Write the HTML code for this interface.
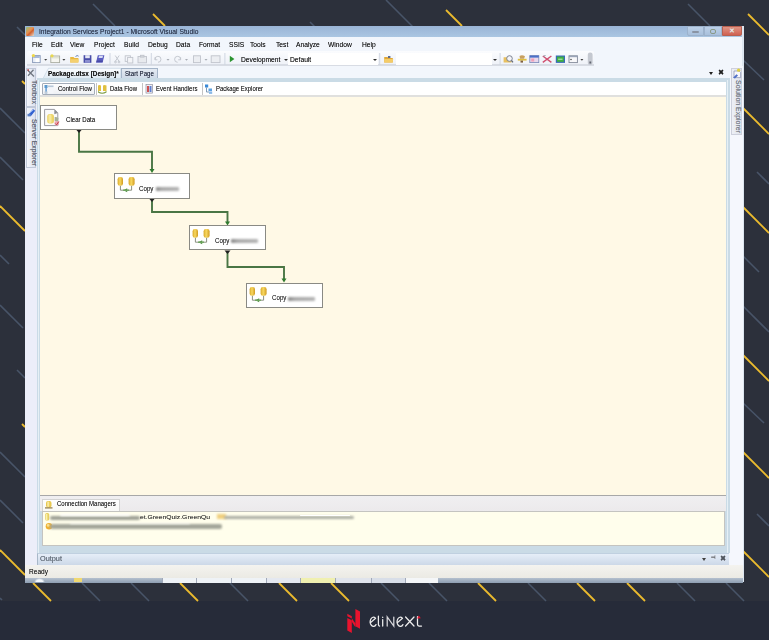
<!DOCTYPE html>
<html><head><meta charset="utf-8">
<style>
*{margin:0;padding:0;box-sizing:border-box}
html,body{width:769px;height:640px;overflow:hidden;background:#2c303b;font-family:"Liberation Sans",sans-serif}
.a{position:absolute}
.t{position:absolute;white-space:nowrap;line-height:1;color:#1e1e1e;text-shadow:0 0 0.5px rgba(0,0,0,0.45)}
</style></head><body>
<svg class="a" style="left:0;top:0" width="769" height="640" viewBox="0 0 769 640">
<rect x="0" y="601" width="769" height="39" fill="#262b39"/>
<g stroke="#485468" stroke-width="1.6" fill="none">
<line x1="17" y1="27" x2="25" y2="35"/>
<line x1="93" y1="4" x2="115" y2="26"/>
<line x1="310" y1="22" x2="315" y2="27"/>
<line x1="386" y1="0" x2="413" y2="27"/>
<line x1="688" y1="4" x2="710" y2="26"/>
<line x1="0" y1="108" x2="25" y2="133"/>
<line x1="0" y1="157" x2="23" y2="180"/>
<line x1="0" y1="255" x2="9" y2="264"/>
<line x1="0" y1="305" x2="23" y2="328"/>
<line x1="17" y1="370" x2="25" y2="378"/>
<line x1="0" y1="452" x2="25" y2="477"/>
<line x1="0" y1="500" x2="23" y2="523"/>
<line x1="743" y1="60" x2="764" y2="80"/>
<line x1="757" y1="172" x2="769" y2="184"/>
<line x1="743" y1="256" x2="759" y2="272"/>
<line x1="743" y1="306" x2="769" y2="332"/>
<line x1="743" y1="403" x2="764" y2="423"/>
<line x1="757" y1="514" x2="769" y2="526"/>
<line x1="0" y1="598" x2="2" y2="600"/>
<line x1="82" y1="583" x2="100" y2="601"/>
<line x1="131" y1="583" x2="149" y2="601"/>
<line x1="230" y1="583" x2="248" y2="601"/>
<line x1="381" y1="583" x2="399" y2="601"/>
<line x1="429" y1="583" x2="447" y2="601"/>
<line x1="528" y1="583" x2="546" y2="601"/>
<line x1="677" y1="583" x2="695" y2="601"/>
<line x1="726" y1="583" x2="744" y2="601"/>
</g>
<g stroke="#ebbb2e" stroke-width="1.8" fill="none">
<line x1="153" y1="14" x2="165" y2="26"/>
<line x1="446" y1="10" x2="462" y2="26"/>
<line x1="748" y1="14" x2="769" y2="35"/>
<line x1="22" y1="81" x2="25" y2="84"/>
<line x1="0" y1="206" x2="25" y2="231"/>
<line x1="22" y1="424" x2="25" y2="427"/>
<line x1="0" y1="550" x2="25" y2="575"/>
<line x1="743" y1="108" x2="769" y2="134"/>
<line x1="743" y1="207" x2="769" y2="233"/>
<line x1="743" y1="355" x2="769" y2="381"/>
<line x1="743" y1="452" x2="769" y2="478"/>
<line x1="743" y1="551" x2="769" y2="577"/>
<line x1="33" y1="583" x2="51" y2="601"/>
<line x1="180" y1="583" x2="198" y2="601"/>
<line x1="279" y1="583" x2="297" y2="601"/>
<line x1="331" y1="583" x2="349" y2="601"/>
<line x1="478" y1="583" x2="496" y2="601"/>
<line x1="577" y1="583" x2="595" y2="601"/>
<line x1="627" y1="583" x2="645" y2="601"/>
</g></svg>
<svg class="a" style="left:340px;top:604px" width="90" height="34" viewBox="340 604 90 34">
<g fill="#e8132e">
<polygon points="355.4,609 360,611.4 360,628.7 355.4,626.3"/>
<polygon points="347.3,618 351.8,620.3 351.8,633 347.3,630.5"/>
<polygon points="347.3,613.8 351.8,616.2 351.8,618.6 347.3,616.3"/>
<polygon points="351.8,618.2 355.4,623.6 355.4,627.2 351.8,621.8"/>
</g>
<g fill="none" stroke="#eeeeee" stroke-width="1.25" stroke-linecap="round">
<path d="M375.6,618.3 L370.3,622.9 M375.3,618 A3.2,4.6 0 1 0 376,624.6"/>
<path d="M378.4,616 V624.6 Q378.4,626 379.6,626"/>
<path d="M382.7,619.6 V626 M382.7,617.2 V617.4"/>
<path d="M387.2,626 V617 L393.8,626 V617" stroke="#d8d8dc"/>
<path d="M402.5,618.3 L397.2,622.9 M402.2,618 A3.2,4.6 0 1 0 402.9,624.6"/>
<path d="M405.6,617 L414,626 M414,617 L405.6,626"/>
<path d="M417.5,616.5 V624.6 Q417.5,626 419,626 H421.5"/>
</g>
<polygon points="417,618.6 420.8,618.2 418.8,615.6" fill="#e8132e"/>
</svg>
<div class="a" style="left:25px;top:26px;width:718px;height:557px;background:#f2f6fc;"></div>
<div class="a" style="left:25px;top:26px;width:718px;height:11px;background:linear-gradient(#9ab4d6,#aac6e2);"></div>
<div class="t" style="left:38.5px;top:27.93px;font-size:7.37px;color:#2a3550;transform:scaleX(0.9091);transform-origin:0 0;">Integration Services Project1 - Microsoft Visual Studio</div>
<div class="a" style="left:687px;top:26px;width:17px;height:10px;background:linear-gradient(#bcd0e8,#a8c0dc);border:1px solid #9cb2cc;border-radius:0 0 0 2px"></div>
<div class="a" style="left:704px;top:26px;width:18px;height:10px;background:linear-gradient(#bcd0e8,#a8c0dc);border:1px solid #9cb2cc"></div>
<div class="a" style="left:692px;top:31.2px;width:7px;height:1.6px;background:#8a94a4;border-radius:1px"></div>
<div class="a" style="left:710px;top:29.2px;width:6px;height:5px;background:transparent;border:1.1px solid #8a9a88;border-radius:2px"></div>
<div class="a" style="left:722px;top:26px;width:19.5px;height:10px;background:linear-gradient(#e09484,#d06050);border:1px solid #b86050;border-radius:0 0 2px 0"></div>
<div class="t" style="left:729.2px;top:28.3px;font-size:6.5px;color:#f4f0f0;font-weight:bold;transform:none">&#x2715;</div>
<div class="a" style="left:741.5px;top:26px;width:2px;height:556px;background:#dde6f0;"></div>
<div class="a" style="left:26px;top:26.5px;width:8px;height:9px;background:linear-gradient(135deg,#8cc080 0%,#e89050 45%,#d06030 60%,#e8e0d0 100%);border-radius:1px"></div>
<div class="t" style="left:32px;top:41.33px;font-size:7.37px;color:#101010;transform:scaleX(0.9091);transform-origin:0 0;">File</div>
<div class="t" style="left:51px;top:41.33px;font-size:7.37px;color:#101010;transform:scaleX(0.9091);transform-origin:0 0;">Edit</div>
<div class="t" style="left:70px;top:41.33px;font-size:7.37px;color:#101010;transform:scaleX(0.9091);transform-origin:0 0;">View</div>
<div class="t" style="left:94px;top:41.33px;font-size:7.37px;color:#101010;transform:scaleX(0.9091);transform-origin:0 0;">Project</div>
<div class="t" style="left:123.5px;top:41.33px;font-size:7.37px;color:#101010;transform:scaleX(0.9091);transform-origin:0 0;">Build</div>
<div class="t" style="left:147.8px;top:41.33px;font-size:7.37px;color:#101010;transform:scaleX(0.9091);transform-origin:0 0;">Debug</div>
<div class="t" style="left:176.2px;top:41.33px;font-size:7.37px;color:#101010;transform:scaleX(0.9091);transform-origin:0 0;">Data</div>
<div class="t" style="left:198.8px;top:41.33px;font-size:7.37px;color:#101010;transform:scaleX(0.9091);transform-origin:0 0;">Format</div>
<div class="t" style="left:229px;top:41.33px;font-size:7.37px;color:#101010;transform:scaleX(0.9091);transform-origin:0 0;">SSIS</div>
<div class="t" style="left:250px;top:41.33px;font-size:7.37px;color:#101010;transform:scaleX(0.9091);transform-origin:0 0;">Tools</div>
<div class="t" style="left:275.5px;top:41.33px;font-size:7.37px;color:#101010;transform:scaleX(0.9091);transform-origin:0 0;">Test</div>
<div class="t" style="left:296px;top:41.33px;font-size:7.37px;color:#101010;transform:scaleX(0.9091);transform-origin:0 0;">Analyze</div>
<div class="t" style="left:328px;top:41.33px;font-size:7.37px;color:#101010;transform:scaleX(0.9091);transform-origin:0 0;">Window</div>
<div class="t" style="left:362px;top:41.33px;font-size:7.37px;color:#101010;transform:scaleX(0.9091);transform-origin:0 0;">Help</div>
<div class="a" style="left:27px;top:51px;width:567px;height:14px;background:linear-gradient(#fbfcfe,#eef1f7);border-radius:2px"></div>
<div class="a" style="left:27px;top:64px;width:567px;height:2px;background:#d8dce4;"></div>
<svg class="a" style="left:0;top:50px" width="600" height="18" viewBox="0 50 600 18">
<g>
<!-- new project -->
<rect x="32.6" y="55.6" width="7.6" height="7" fill="#e8eef8" stroke="#8898b8" stroke-width="0.9"/>
<rect x="33.2" y="56.2" width="6.4" height="1.6" fill="#98acd0"/>
<rect x="35.5" y="58.3" width="3.8" height="3.8" fill="#ffffff"/>
<circle cx="33.4" cy="55.6" r="1.6" fill="#f0d848"/>
<!-- add item -->
<rect x="50.8" y="56" width="8.8" height="6.6" fill="#f6f6f0" stroke="#a8aca0" stroke-width="0.9"/>
<path d="M51.3,57.8 H59" stroke="#d8dcc8" stroke-width="1"/>
<circle cx="52" cy="55.8" r="1.6" fill="#e8d850"/>
<!-- open -->
<path d="M70.2,57 H73.5 L74.5,58 H78.4 V62.6 H70.2 Z" fill="#e8b840"/>
<path d="M70.2,59.2 H78.8 L78.2,62.6 H70.2 Z" fill="#f4d070"/>
<path d="M75.5,56.5 Q77.2,54.8 78.6,56.2" fill="none" stroke="#4060a0" stroke-width="0.8"/>
<!-- save -->
<rect x="83.6" y="55.2" width="7.8" height="7.6" fill="#4a4ea8"/>
<rect x="85.2" y="55.2" width="4.6" height="3" fill="#e4e6f4"/>
<rect x="85" y="60" width="5" height="2.8" fill="#8a8ed0"/>
<!-- save all -->
<path d="M97.8,55.2 H104.4 L102.6,62.8 H96 Z" fill="#5a5cc0"/>
<path d="M99,55.8 H103 L102.5,58 H98.5 Z" fill="#d8dcf4"/>
<path d="M96.3,61.2 H102.8" stroke="#3a3c90" stroke-width="0.8"/>
</g>
<g fill="none" stroke="#c0c4cc" stroke-width="0.9">
<path d="M115.2,55.5 L119.2,61.5 M119.2,55.5 L115.2,61.5"/><circle cx="115.5" cy="62" r="0.9"/><circle cx="119" cy="62" r="0.9"/>
<rect x="125.2" y="55.8" width="5.2" height="5.6"/><rect x="127.6" y="57.4" width="5.2" height="5.6" fill="#f4f5f8"/>
<rect x="138" y="56.5" width="8.5" height="6.3" fill="#e8eaee"/><rect x="140.5" y="55.3" width="3.5" height="1.8" fill="#d8dade"/>
<path d="M155,59.5 A3,3 0 1 1 158,62.3" /><path d="M155,57.3 V59.8 H157.4"/>
<path d="M180.6,59.5 A3,3 0 1 0 177.6,62.3"/><path d="M180.6,57.3 V59.8 H178.2"/>
<rect x="193.5" y="55.8" width="7" height="6.8" fill="#eceef2"/>
<rect x="211.2" y="55.8" width="8.8" height="6.8" fill="#eceef2"/>
</g>
<g fill="#a8acb4">
<path d="M166.5,59 h3 l-1.5,1.8 z"/><path d="M185,59 h3 l-1.5,1.8 z"/><path d="M204.5,59 h3 l-1.5,1.8 z"/>
<path d="M44.2,59 h3 l-1.5,1.8 z" fill="#404040"/><path d="M62.4,59 h3 l-1.5,1.8 z" fill="#404040"/>
</g>
<g fill="#d0d6e2"><rect x="109.5" y="53" width="1" height="12"/><rect x="150.8" y="53" width="1" height="12"/><rect x="224.4" y="53" width="1" height="12"/><rect x="379.2" y="53" width="1" height="12"/><rect x="499.6" y="53" width="1" height="12"/></g>
<path d="M229.8,55.8 L234.4,59 L229.8,62.2 Z" fill="#2c9430"/>
<!-- right icons -->
<path d="M384.2,57 H387.5 L388.5,58 H392.8 V62.6 H384.2 Z" fill="#e0a838"/>
<path d="M384.2,59 H393.2 L392.6,62.6 H384.2 Z" fill="#f4cc68"/>
<rect x="388" y="56" width="2.4" height="2" fill="#5a6a90"/>
<path d="M503.6,57.2 H507 L508,58.2 H511.5 V62.4 H503.6 Z" fill="#e8c060"/>
<circle cx="509.5" cy="58.5" r="2.8" fill="#f4f4f8" stroke="#707888" stroke-width="0.9"/>
<path d="M511.5,60.5 L513,62.3" stroke="#606878" stroke-width="1.2"/>
<path d="M517.8,58.8 H526.6 V60.6 H517.8 Z" fill="#e0c040"/>
<path d="M519.5,56 Q522,54.5 525,56.2 L524,58.8 H520 Z" fill="#c8a060"/>
<path d="M520.5,60.6 V62.6 H523 V60.6 Z" fill="#806040"/>
<rect x="529.8" y="55.6" width="9" height="7" fill="#e8d8ec" stroke="#7888b8" stroke-width="0.8"/>
<rect x="529.8" y="55.6" width="9" height="2" fill="#4a70c8"/>
<rect x="531.2" y="58.5" width="3" height="3" fill="#f0a0b8"/>
<path d="M542.8,56 L551.4,62.4 M551.4,56 L542.8,62.4" stroke="#d05070" stroke-width="1.4"/>
<path d="M543.5,56.2 L545.5,55.5" stroke="#9098a8" stroke-width="1"/>
<rect x="555.8" y="55.5" width="9.2" height="7.4" fill="#3a6ab8"/>
<rect x="557" y="56.6" width="6.8" height="5.2" fill="#40b040"/>
<path d="M558.2,59.2 H562.5" stroke="#e8ffe8" stroke-width="0.8"/>
<rect x="569" y="55.8" width="8.4" height="6.8" fill="#f8f8fa" stroke="#808898" stroke-width="0.9"/>
<rect x="569" y="55.8" width="8.4" height="1.4" fill="#9aa4b8"/>
<circle cx="571" cy="59.5" r="0.7" fill="#303030"/>
<path d="M580.4,59 h3 l-1.5,1.8 z" fill="#404040"/>
<rect x="587.8" y="52.5" width="4.8" height="12.5" rx="2.2" fill="#c4c8d0"/>
<rect x="589.4" y="61.5" width="1.8" height="2" fill="#606470"/>
</svg>
<div class="t" style="left:240.5px;top:55.93px;font-size:7.37px;color:#101010;transform:scaleX(0.9091);transform-origin:0 0;">Development</div>
<div class="a" style="left:283.5px;top:59.3px;width:0;height:0;border-left:2px solid transparent;border-right:2px solid transparent;border-top:2px solid #303030"></div>
<div class="a" style="left:288px;top:53px;width:90px;height:12px;background:#ffffff;"></div>
<div class="t" style="left:290.2px;top:55.93px;font-size:7.37px;color:#101010;transform:scaleX(0.9091);transform-origin:0 0;">Default</div>
<div class="a" style="left:372.8px;top:59.3px;width:0;height:0;border-left:2px solid transparent;border-right:2px solid transparent;border-top:2px solid #303030"></div>
<div class="a" style="left:396px;top:53px;width:96px;height:12px;background:#ffffff;"></div>
<div class="a" style="left:493.2px;top:59.3px;width:0;height:0;border-left:2px solid transparent;border-right:2px solid transparent;border-top:2px solid #303030"></div>
<div class="a" style="left:37px;top:66px;width:692px;height:13px;background:#f2f6fc;"></div>
<svg class="a" style="left:40px;top:66px" width="84" height="14" viewBox="40 66 84 14">
<defs><linearGradient id="atab" x1="0" y1="0" x2="0" y2="1"><stop offset="0" stop-color="#fbfdff"/><stop offset="1" stop-color="#dde8f2"/></linearGradient></defs>
<path d="M42.5,79.5 L48.5,68.3 H120.8 V79.5 Z" fill="url(#atab)" stroke="#c8d6e4" stroke-width="0.8"/>
</svg>
<div class="t" style="left:47.6px;top:69.96px;font-size:7.04px;color:#101010;transform:scaleX(0.9091);transform-origin:0 0;font-weight:bold">Package.dtsx [Design]*</div>
<div class="a" style="left:120.8px;top:68.3px;width:37.2px;height:10.2px;background:linear-gradient(#e4eaf2,#d0dae8);border:1px solid #a4b4c8;border-bottom:none"></div>
<div class="t" style="left:124.8px;top:70.68px;font-size:6.71px;color:#202840;transform:scaleX(0.9091);transform-origin:0 0;">Start Page</div>
<div class="a" style="left:709px;top:71.5px;width:0;height:0;border-left:2.5px solid transparent;border-right:2.5px solid transparent;border-top:3px solid #202020"></div>
<div class="t" style="left:718.2px;top:68.99px;font-size:7.92px;color:#202020;transform:scaleX(0.9091);transform-origin:0 0;">&#x2716;</div>
<div class="a" style="left:25px;top:66px;width:12px;height:500px;background:#eceef9;"></div>
<div class="a" style="left:26.3px;top:68.3px;width:9.5px;height:38.5px;background:linear-gradient(90deg,#f4f6fc,#dde2ee);border:1px solid #c0c8d8"></div>
<div class="a" style="left:26.3px;top:106.8px;width:9.5px;height:61px;background:linear-gradient(90deg,#f4f6fc,#dde2ee);border:1px solid #c0c8d8"></div>
<div class="t" style="left:27.5px;top:80.3px;font-size:6.96px;color:#606878;transform-origin:0 0;transform:rotate(90deg) translate(0,-8.5px)">Toolbox</div>
<div class="t" style="left:27.5px;top:119px;font-size:6.77px;color:#606878;transform-origin:0 0;transform:rotate(90deg) translate(0,-8.5px)">Server Explorer</div>
<svg class="a" style="left:25px;top:66px" width="12" height="54" viewBox="25 66 12 54">
<path d="M27.5,70 L34,76.5 M33.5,69.8 L28,75.8" stroke="#707680" stroke-width="1.3"/>
<path d="M27,69.5 L29,69.3 L28.6,71.5 Z" fill="#c04040"/>
<path d="M28.5,114.5 L33,109 L35.2,110.8 L30.8,116.2 Z" fill="#3060d0"/>
<path d="M30,112.5 L33.5,109.8" stroke="#a0c0f8" stroke-width="0.9"/>
<rect x="27.5" y="113.8" width="3.2" height="2.6" fill="#5a80c8"/>
</svg>
<div class="a" style="left:730px;top:66px;width:13px;height:500px;background:#f5f7fd;"></div>
<div class="a" style="left:730.6px;top:67.8px;width:11px;height:67px;background:linear-gradient(90deg,#eef0f6,#dde1ea);border:1px solid #cdd0dc"></div>
<svg class="a" style="left:730px;top:66px" width="13" height="14" viewBox="730 66 13 14">
<path d="M734,71 H739 L740.6,72.6 V77.6 H734 Z" fill="#f8f8fc" stroke="#8890b0" stroke-width="0.7"/>
<circle cx="738.6" cy="70.2" r="1.6" fill="#e0d040"/>
<path d="M733,77.8 L736.5,74.2 L738,75.6 L735,78.4 Z" fill="#5070c8"/>
</svg>
<div class="t" style="left:732px;top:80px;font-size:6.96px;color:#7a8290;transform-origin:0 0;transform:rotate(90deg) translate(0,-8.8px)">Solution Explorer</div>
<div class="a" style="left:37px;top:78px;width:693px;height:475px;background:#cadbe6;"></div>
<div class="a" style="left:38px;top:80px;width:1.2px;height:473px;background:#e6f0f6;"></div>
<div class="a" style="left:727.2px;top:80px;width:1.2px;height:473px;background:#e6f0f6;"></div>
<div class="a" style="left:40px;top:81.5px;width:686px;height:13px;background:#ffffff;"></div>
<div class="a" style="left:40px;top:94.5px;width:686px;height:2px;background:#e0e0de;"></div>
<div class="a" style="left:42.3px;top:83.2px;width:53.2px;height:11.5px;background:linear-gradient(#fefefe,#eef0f4);border:1px solid #a4acb8;border-radius:1px"></div>
<svg class="a" style="left:0;top:80px" width="230" height="18" viewBox="0 80 230 18">
<rect x="44.5" y="85" width="9" height="8.6" fill="#f4f6fa"/>
<rect x="44.5" y="85" width="3" height="3" fill="#5a9ad0"/>
<rect x="47.5" y="85.5" width="6" height="1.6" fill="#b8c8d8"/>
<rect x="45.2" y="88" width="1.8" height="5.5" fill="#7aaad8"/>
<rect x="44.5" y="91.5" width="3" height="2.1" fill="#c0ccd8"/>
<path d="M98,85.5 Q99.5,84.5 101,85.5 V91 H98 Z M103,85.5 Q104.5,84.5 106.5,85.5 V91 H103 Z" fill="#e0c040"/>
<path d="M98,91 Q102,94.5 106.5,91 V92.5 Q102,95 98,92.5 Z" fill="#7a9a40"/>
<rect x="146" y="84.5" width="6.5" height="8.6" fill="#f0f0f4" stroke="#9090a0" stroke-width="0.7"/>
<rect x="147" y="86" width="2" height="6" fill="#d05050"/>
<rect x="149.5" y="86" width="2" height="6" fill="#6080d0"/>
<rect x="205" y="84.5" width="3.2" height="3" fill="#3a8ad8"/>
<path d="M206.5,87.5 V92 H209" fill="none" stroke="#7090b0" stroke-width="0.9"/>
<rect x="208.5" y="88.5" width="3.5" height="2.6" fill="#5aa0e0"/>
<rect x="209" y="91.5" width="3.2" height="2.4" fill="#8ab8e8"/>
</svg>
<div class="t" style="left:57.5px;top:86.28px;font-size:6.67px;color:#1a1a1a;transform:scaleX(0.9091);transform-origin:0 0;">Control Flow</div>
<div class="a" style="left:96px;top:83px;width:1px;height:12px;background:#c4c4c4;"></div>
<div class="t" style="left:110.2px;top:86.29px;font-size:6.60px;color:#1a1a1a;transform:scaleX(0.9091);transform-origin:0 0;">Data Flow</div>
<div class="a" style="left:141.8px;top:83px;width:1px;height:12px;background:#c4c4c4;"></div>
<div class="t" style="left:156.3px;top:86.28px;font-size:6.68px;color:#1a1a1a;transform:scaleX(0.9091);transform-origin:0 0;">Event Handlers</div>
<div class="a" style="left:202.3px;top:83px;width:1px;height:12px;background:#c4c4c4;"></div>
<div class="t" style="left:216px;top:86.29px;font-size:6.55px;color:#1a1a1a;transform:scaleX(0.9091);transform-origin:0 0;">Package Explorer</div>
<div class="a" style="left:40px;top:96.5px;width:686px;height:398.5px;background:#fff9e6;"></div>
<svg class="a" style="left:0;top:0" width="769" height="640" viewBox="0 0 769 640">
<g fill="none" stroke="#4a7644" stroke-width="1.9">
<polyline points="79,131 79,151.8 152,151.8 152,170"/>
<polyline points="152,200 152,212 227.5,212 227.5,222"/>
<polyline points="227.5,252 227.5,267 284,267 284,279"/>
</g>
<g fill="#2f7a2f">
<polygon points="149.5,169 154.5,169 152,173"/>
<polygon points="225,221.5 230,221.5 227.5,225.5"/>
<polygon points="281.5,278.5 286.5,278.5 284,282.5"/>
</g>
<g fill="#202020">
<polygon points="76,129.5 82,129.5 79,133"/>
<polygon points="149,198.5 155,198.5 152,202"/>
<polygon points="224.5,250.5 230.5,250.5 227.5,254"/>
</g>
</svg>
<div class="a" style="left:40px;top:105px;width:77px;height:25px;background:#ffffff;border:1.5px solid #8a8a84"></div>
<svg class="a" style="left:40px;top:105px" width="24" height="25" viewBox="0 0 24 25">
<path d="M4.6,4.4 H14.5 L17.8,7.8 V20.6 H4.6 Z" fill="#fafafa" stroke="#9a9aa0" stroke-width="1"/>
<path d="M14.3,4.6 L17.6,8 L14.3,9.2 Z" fill="#8a8c90"/>
<rect x="7.2" y="9" width="6.8" height="9.4" rx="2.5" fill="#ecd46a"/>
<rect x="8.5" y="9.5" width="3" height="8.5" rx="1.2" fill="#f6e89a"/>
<path d="M14.6,12 Q16.5,11.5 18.5,13 L18,16 L14.6,16 Z" fill="#a8b098"/>
<path d="M14.5,16.4 Q17,15.5 19.2,17 L18.6,20 Q16.5,21.2 14.8,19.8 Z" fill="#e8a8b0"/>
<path d="M15.3,18.5 L16.6,19.8 L18.8,16.5" fill="none" stroke="#c83040" stroke-width="0.9"/>
</svg>
<div class="t" style="left:66px;top:117.08px;font-size:6.72px;color:#1a1a1a;transform:scaleX(0.9091);transform-origin:0 0;">Clear Data</div>
<div class="a" style="left:113.5px;top:173px;width:76.5px;height:25.5px;background:#ffffff;border:1.5px solid #8a8a84"></div>
<svg class="a" style="left:113.5px;top:173px" width="24" height="25" viewBox="0 0 24 25">
<defs><linearGradient id="cy1" x1="0" x2="1"><stop offset="0" stop-color="#d8a82a"/><stop offset="0.45" stop-color="#f8d860"/><stop offset="1" stop-color="#d09a20"/></linearGradient></defs>
<rect x="3.6" y="4" width="5.4" height="8.8" rx="2.2" fill="url(#cy1)"/>
<rect x="14.6" y="4" width="6" height="8.8" rx="2.2" fill="url(#cy1)"/>
<path d="M6.4,12.8 V17.2 H17.6 V12.8" fill="none" stroke="#8a9080" stroke-width="1"/>
<path d="M9.5,17.2 L13.2,15.2 L13.2,19.2 Z" fill="#4a8a3a"/>
<path d="M9,17.2 H15" stroke="#70a860" stroke-width="1.4"/>
</svg>
<div class="t" style="left:139.0px;top:185.68px;font-size:6.79px;color:#2a2a2a;transform:scaleX(0.9091);transform-origin:0 0;">Copy</div>
<div class="a" style="left:155.5px;top:187px;width:23px;height:4px;background:linear-gradient(90deg,#888 0%,#aaa 25%,#b4b4b4 100%);filter:blur(0.9px);border-radius:1px"></div>
<div class="a" style="left:189px;top:225.2px;width:76.5px;height:25px;background:#ffffff;border:1.5px solid #8a8a84"></div>
<svg class="a" style="left:189px;top:225.2px" width="24" height="25" viewBox="0 0 24 25">
<defs><linearGradient id="cy2" x1="0" x2="1"><stop offset="0" stop-color="#d8a82a"/><stop offset="0.45" stop-color="#f8d860"/><stop offset="1" stop-color="#d09a20"/></linearGradient></defs>
<rect x="3.6" y="4" width="5.4" height="8.8" rx="2.2" fill="url(#cy2)"/>
<rect x="14.6" y="4" width="6" height="8.8" rx="2.2" fill="url(#cy2)"/>
<path d="M6.4,12.8 V17.2 H17.6 V12.8" fill="none" stroke="#8a9080" stroke-width="1"/>
<path d="M9.5,17.2 L13.2,15.2 L13.2,19.2 Z" fill="#4a8a3a"/>
<path d="M9,17.2 H15" stroke="#70a860" stroke-width="1.4"/>
</svg>
<div class="t" style="left:214.5px;top:237.88px;font-size:6.79px;color:#2a2a2a;transform:scaleX(0.9091);transform-origin:0 0;">Copy</div>
<div class="a" style="left:231px;top:239.2px;width:27px;height:4px;background:linear-gradient(90deg,#888 0%,#aaa 25%,#b4b4b4 100%);filter:blur(0.9px);border-radius:1px"></div>
<div class="a" style="left:246px;top:282.5px;width:77px;height:25.5px;background:#ffffff;border:1.5px solid #8a8a84"></div>
<svg class="a" style="left:246px;top:282.5px" width="24" height="25" viewBox="0 0 24 25">
<defs><linearGradient id="cy3" x1="0" x2="1"><stop offset="0" stop-color="#d8a82a"/><stop offset="0.45" stop-color="#f8d860"/><stop offset="1" stop-color="#d09a20"/></linearGradient></defs>
<rect x="3.6" y="4" width="5.4" height="8.8" rx="2.2" fill="url(#cy3)"/>
<rect x="14.6" y="4" width="6" height="8.8" rx="2.2" fill="url(#cy3)"/>
<path d="M6.4,12.8 V17.2 H17.6 V12.8" fill="none" stroke="#8a9080" stroke-width="1"/>
<path d="M9.5,17.2 L13.2,15.2 L13.2,19.2 Z" fill="#4a8a3a"/>
<path d="M9,17.2 H15" stroke="#70a860" stroke-width="1.4"/>
</svg>
<div class="t" style="left:271.5px;top:295.18px;font-size:6.79px;color:#2a2a2a;transform:scaleX(0.9091);transform-origin:0 0;">Copy</div>
<div class="a" style="left:288px;top:296.5px;width:26.5px;height:4px;background:linear-gradient(90deg,#888 0%,#aaa 25%,#b4b4b4 100%);filter:blur(0.9px);border-radius:1px"></div>
<div class="a" style="left:40px;top:495px;width:686px;height:16px;background:linear-gradient(#f0eff1,#eceaec);border-top:1.2px solid #a8a8a8"></div>
<div class="a" style="left:41.5px;top:499.3px;width:78.5px;height:11.5px;background:linear-gradient(#ffffff,#f8f8f6);border:1px solid #d4d4d4;border-bottom:none"></div>
<svg class="a" style="left:44px;top:500px" width="10" height="10" viewBox="0 0 10 10">
<rect x="2" y="1" width="5.5" height="6.5" rx="2" fill="#e8c850"/><rect x="3.2" y="1.5" width="2" height="5.5" rx="1" fill="#f8e8a0"/>
<rect x="1" y="7.3" width="7.5" height="1.2" fill="#907840"/></svg>
<div class="t" style="left:56.5px;top:501.29px;font-size:6.61px;color:#1a1a1a;transform:scaleX(0.9091);transform-origin:0 0;">Connection Managers</div>
<div class="a" style="left:41.5px;top:510.5px;width:683.5px;height:35.5px;background:#fffeec;border:1px solid #c4c4c0"></div>
<svg class="a" style="left:44px;top:512px" width="12" height="19" viewBox="0 0 12 19">
<rect x="1.2" y="1" width="4" height="7.5" rx="1.6" fill="#e8d060"/><rect x="1.8" y="2" width="1.6" height="6" fill="#f8f0b0"/>
<circle cx="5" cy="14.2" r="3.3" fill="#f0b030"/><circle cx="4.2" cy="13.4" r="1.4" fill="#f8e090"/>
</svg>
<div class="a" style="left:50px;top:515.8px;width:90px;height:4.6px;background:#9fa196;filter:blur(1.2px);border-radius:2px"></div>
<div class="a" style="left:60px;top:514.2px;width:70px;height:1.5px;background:#ffffff;filter:blur(0.8px);border-radius:2px"></div>
<div class="t" style="left:140px;top:514.3px;font-size:6.77px;color:#303030;transform:scaleY(0.9);transform-origin:0 50%">et.GreenQuiz.GreenQu</div>
<div class="a" style="left:217px;top:514px;width:9px;height:5px;background:#f0d080;filter:blur(1px)"></div>
<div class="a" style="left:224px;top:515.6px;width:130px;height:3.8px;background:#acaea4;filter:blur(1.2px);border-radius:2px"></div>
<div class="a" style="left:300px;top:514.6px;width:50px;height:1.2px;background:#ffffff;filter:blur(0.7px);border-radius:2px"></div>
<div class="a" style="left:50px;top:524.2px;width:172px;height:4.6px;background:#a4a69a;filter:blur(1.2px);border-radius:2px"></div>
<div class="a" style="left:70px;top:522.8px;width:120px;height:1.4px;background:#ffffff;filter:blur(0.8px);border-radius:2px"></div>
<div class="a" style="left:37px;top:553px;width:692px;height:12px;background:linear-gradient(#e6eef8,#ccd8e8);border-top:1px solid #c0d0e0;border-left:1px solid #a8b8c8"></div>
<div class="t" style="left:39.8px;top:554.78px;font-size:8.06px;color:#667280;transform:scaleX(0.9091);transform-origin:0 0;">Output</div>
<div class="a" style="left:702px;top:558px;width:0;height:0;border-left:2.5px solid transparent;border-right:2.5px solid transparent;border-top:3px solid #404040"></div>
<div class="t" style="left:711px;top:554.49px;font-size:6.60px;color:#606060;transform:scaleX(0.9091);transform-origin:0 0;">&#x2AE4;</div>
<div class="t" style="left:720px;top:555.40px;font-size:7.70px;color:#50565e;transform:scaleX(0.9091);transform-origin:0 0;">&#x2716;</div>
<div class="a" style="left:25px;top:565px;width:718px;height:13px;background:linear-gradient(#f4f3ef,#ebeae4);"></div>
<div class="t" style="left:29px;top:568.44px;font-size:7.23px;color:#1a1a1a;transform:scaleX(0.9091);transform-origin:0 0;">Ready</div>
<div class="a" style="left:25px;top:578px;width:718px;height:5px;background:linear-gradient(#b4c0ce,#8e9eb2);"></div>
<div class="a" style="left:34px;top:578px;width:11px;height:4px;background:radial-gradient(ellipse at 50% 100%,#f4f8fc 40%,rgba(255,255,255,0) 70%);"></div>
<div class="a" style="left:74px;top:578px;width:8px;height:4px;background:#f0d870;filter:blur(0.5px)"></div>
<div class="a" style="left:162px;top:578px;width:34px;height:5px;background:#eef2f6;border-left:1px solid #a0a8b8"></div>
<div class="a" style="left:196px;top:578px;width:35px;height:5px;background:#eef2f6;border-left:1px solid #a0a8b8"></div>
<div class="a" style="left:231px;top:578px;width:35px;height:5px;background:#eef2f6;border-left:1px solid #a0a8b8"></div>
<div class="a" style="left:266px;top:578px;width:34px;height:5px;background:#e4e8f0;border-left:1px solid #a0a8b8"></div>
<div class="a" style="left:300px;top:578px;width:34.5px;height:5px;background:#f0f0b0;border-left:1px solid #a0a8b8"></div>
<div class="a" style="left:334.5px;top:578px;width:36px;height:5px;background:#e0e4ec;border-left:1px solid #a0a8b8"></div>
<div class="a" style="left:370.5px;top:578px;width:34px;height:5px;background:#d8dee8;border-left:1px solid #a0a8b8"></div>
<div class="a" style="left:404.5px;top:578px;width:33px;height:5px;background:#f4f6f8;border-left:1px solid #a0a8b8"></div>
</body></html>
